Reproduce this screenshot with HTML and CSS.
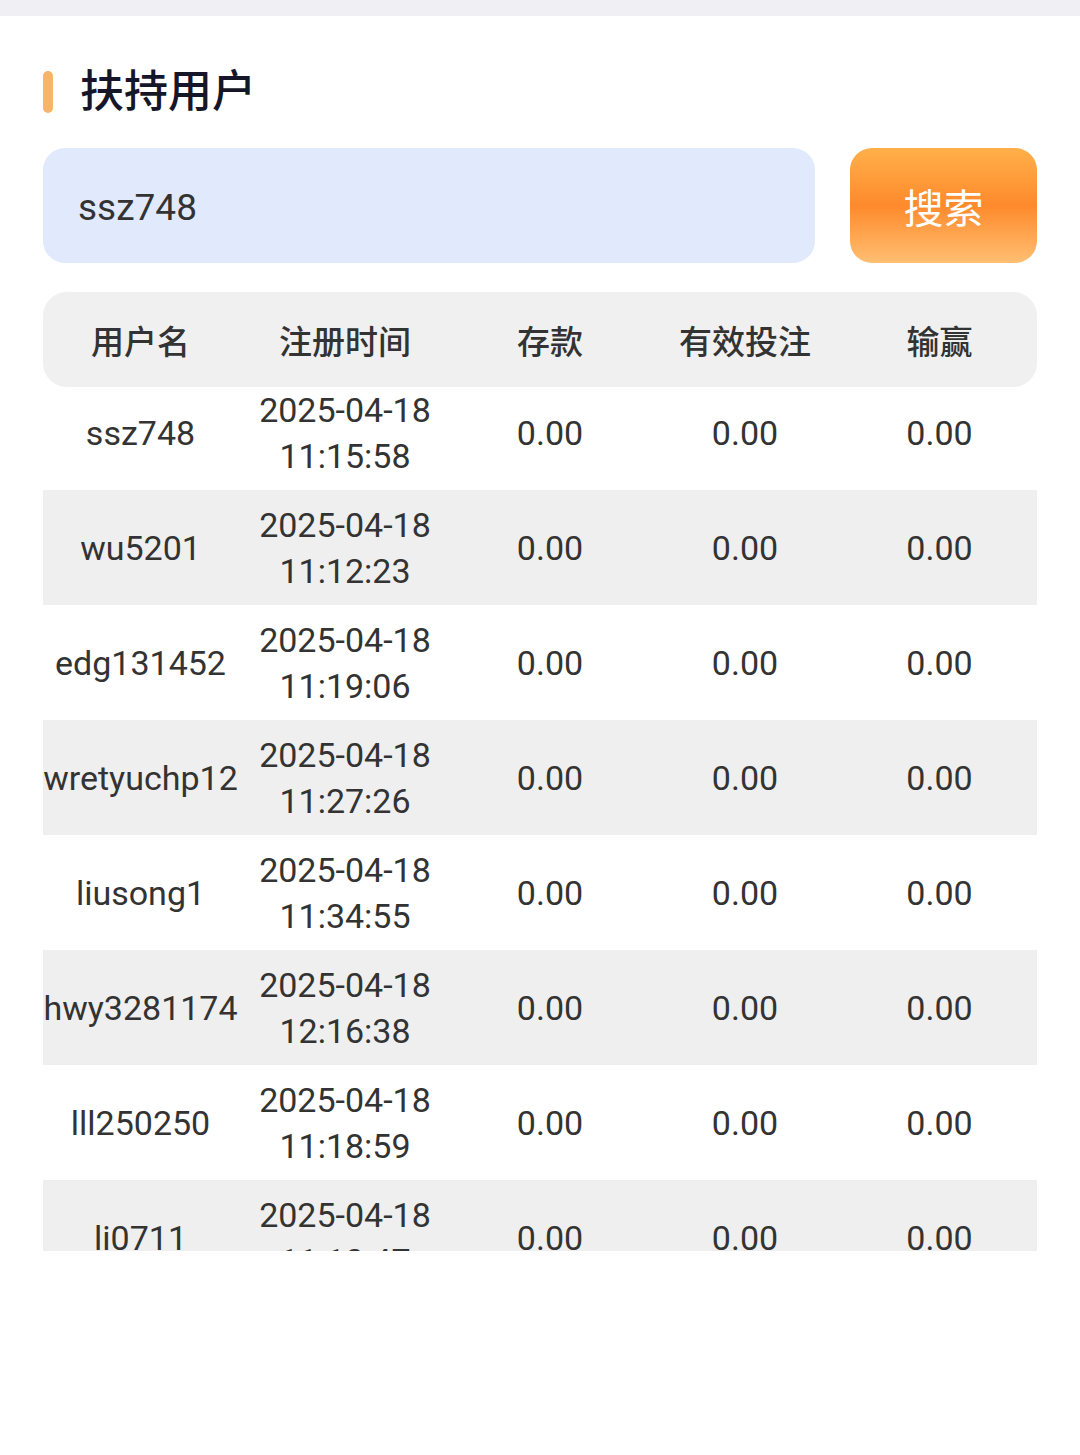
FILE: index.html
```html
<!DOCTYPE html>
<html>
<head>
  <meta charset="utf-8">
  <title>扶持用户</title>
  <link rel="stylesheet" href="styles.css">
</head>
<body>
  <div class="top-band"></div>
  <div class="page">
    <div class="title">
      <span class="title-bar"></span>
      <h1>扶持用户</h1>
    </div>

    <div class="search">
      <input class="search-input" type="text" value="ssz748">
      <button class="search-btn">搜索</button>
    </div>

    <div class="table">
      <div class="row head">
        <div class="cell first">用户名</div>
        <div class="cell c2">注册时间</div>
        <div class="cell c3">存款</div>
        <div class="cell c4">有效投注</div>
        <div class="cell c5">输赢</div>
      </div>
      <div class="row short">
        <div class="cell first">ssz748</div>
        <div class="cell c2">2025-04-18<br>11:15:58</div>
        <div class="cell c3">0.00</div>
        <div class="cell c4">0.00</div>
        <div class="cell c5">0.00</div>
      </div>
      <div class="row alt">
        <div class="cell first">wu5201</div>
        <div class="cell c2">2025-04-18<br>11:12:23</div>
        <div class="cell c3">0.00</div>
        <div class="cell c4">0.00</div>
        <div class="cell c5">0.00</div>
      </div>
      <div class="row">
        <div class="cell first">edg131452</div>
        <div class="cell c2">2025-04-18<br>11:19:06</div>
        <div class="cell c3">0.00</div>
        <div class="cell c4">0.00</div>
        <div class="cell c5">0.00</div>
      </div>
      <div class="row alt">
        <div class="cell first">wretyuchp12</div>
        <div class="cell c2">2025-04-18<br>11:27:26</div>
        <div class="cell c3">0.00</div>
        <div class="cell c4">0.00</div>
        <div class="cell c5">0.00</div>
      </div>
      <div class="row">
        <div class="cell first">liusong1</div>
        <div class="cell c2">2025-04-18<br>11:34:55</div>
        <div class="cell c3">0.00</div>
        <div class="cell c4">0.00</div>
        <div class="cell c5">0.00</div>
      </div>
      <div class="row alt">
        <div class="cell first">hwy3281174</div>
        <div class="cell c2">2025-04-18<br>12:16:38</div>
        <div class="cell c3">0.00</div>
        <div class="cell c4">0.00</div>
        <div class="cell c5">0.00</div>
      </div>
      <div class="row">
        <div class="cell first">lll250250</div>
        <div class="cell c2">2025-04-18<br>11:18:59</div>
        <div class="cell c3">0.00</div>
        <div class="cell c4">0.00</div>
        <div class="cell c5">0.00</div>
      </div>
      <div class="row alt">
        <div class="cell first">li0711</div>
        <div class="cell c2">2025-04-18<br>11:10:47</div>
        <div class="cell c3">0.00</div>
        <div class="cell c4">0.00</div>
        <div class="cell c5">0.00</div>
      </div>
    </div>
  </div>
</body>
</html>
```

FILE: styles.css
```css
body {
  margin: 0;
  background-color: #fff;
  font-family: Roboto, "Noto Sans CJK SC", sans-serif;
  color: #333;
}

.top-band {
  height: 16px;
  background-color: #efeff4;
}

.page {
  padding: 0 43px;
}

.title {
  display: flex;
  align-items: center;
  gap: 27px;
  height: 56px;
  margin-top: 48px;
}

.title-bar {
  width: 10px;
  height: 42px;
  border-radius: 5px;
  background-color: #f7b56a;
}

.title h1 {
  margin: 0;
  font-size: 44px;
  font-weight: 500;
  color: #161629;
  line-height: 56px;
}

.search {
  display: flex;
  gap: 35px;
  margin-top: 28px;
  height: 115px;
}

.search-input {
  flex: 1;
  border: none;
  outline: none;
  border-radius: 22px;
  background-color: #e1eafc;
  padding: 4px 35px 0;
  font-family: Roboto, "Noto Sans CJK SC", sans-serif;
  font-size: 37px;
  color: #333;
}

.search-btn {
  width: 187px;
  border: none;
  border-radius: 22px;
  background: linear-gradient(180deg, #ffb04a 0%, #fe8a2c 50%, #ffbf72 100%);
  color: #fff;
  font-family: "Noto Sans CJK SC", sans-serif;
  font-size: 40px;
  cursor: pointer;
}

.table {
  margin-top: 29px;
  height: 959px;
  overflow: hidden;
}

.row {
  display: flex;
  align-items: center;
  height: 115px;
  font-size: 34px;
  line-height: 46px;
}

.row.head {
  height: 95px;
  border-radius: 24px;
  background-color: #f0f0f0;
  font-family: "Noto Sans CJK SC", sans-serif;
  font-size: 33px;
  font-weight: 500;
}

.row.short {
  box-sizing: border-box;
  height: 103px;
  padding-bottom: 12px;
}

.row.alt {
  background-color: #efefef;
}

.cell {
  text-align: center;
  white-space: nowrap;
}

.cell.first {
  flex: 0 0 auto;
  min-width: 195px;
}

.cell.c2 { flex: 214 1 0; }
.cell.c3 { flex: 196 1 0; }
.cell.c4 { flex: 194 1 0; }
.cell.c5 { flex: 195 1 0; }
```
